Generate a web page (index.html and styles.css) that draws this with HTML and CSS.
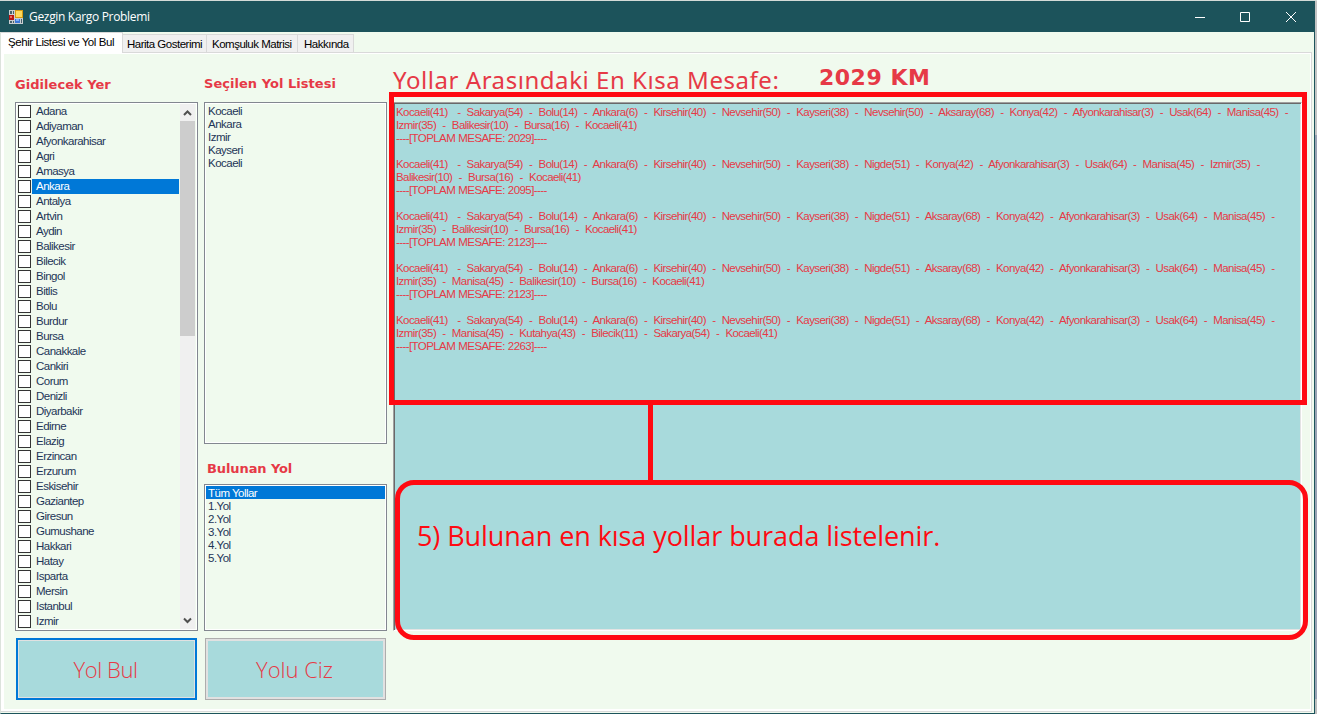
FILE: index.html
```html
<!DOCTYPE html>
<html lang="tr">
<head>
<meta charset="utf-8">
<title>Gezgin Kargo Problemi</title>
<link rel="stylesheet" href="styles.css">
</head>
<body>
<div class="desktop">
<div class="window">
  <header class="titlebar">
    <svg class="app-icon" width="14" height="14" viewBox="0 0 14 14" shape-rendering="crispEdges">
      <rect width="14" height="14" fill="#c9cdd0"/>
      <rect x="1" y="1" width="2" height="3" fill="#46606a"/><rect x="4" y="1" width="1" height="3" fill="#46606a"/>
      <rect x="0" y="5" width="5" height="5" fill="#b81414"/><rect x="1" y="6" width="2" height="2" fill="#ee6a5c"/>
      <rect x="6" y="0" width="8" height="8" fill="#d79a12"/><rect x="7" y="1" width="6" height="6" fill="#ffd95c"/>
      <rect x="1" y="11" width="2" height="2" fill="#46606a"/><rect x="4" y="11" width="1" height="2" fill="#46606a"/><rect x="6" y="9" width="5" height="4" fill="#3d78d8"/><rect x="7" y="9" width="3" height="2" fill="#7fb0f5"/><rect x="12" y="9" width="1" height="4" fill="#46606a"/>
    </svg>
    <span class="title">Gezgin Kargo Problemi</span>
    <svg class="controls" width="104" height="12" viewBox="0 0 104 12" fill="none" stroke="#fff">
      <path d="M0 6.5H10M45.5 1.5h9v9h-9zM91 1l10 10M101 1L91 11"/>
    </svg>
  </header>
  <nav class="tabs">
    <span class="tab active">Şehir Listesi ve Yol Bul</span><span class="tab w1">Harita Gosterimi</span><span class="tab w2">Komşuluk Matrisi</span><span class="tab w3">Hakkında</span>
  </nav>
  <main class="page">
    <section class="col-cities">
      <h2 class="label l-cities">Gidilecek Yer</h2>
      <div class="box cities">
        <ul class="checks">
          <li><i></i><span>Adana</span></li><li><i></i><span>Adiyaman</span></li><li><i></i><span>Afyonkarahisar</span></li><li><i></i><span>Agri</span></li><li><i></i><span>Amasya</span></li><li class="sel"><i></i><span>Ankara</span></li><li><i></i><span>Antalya</span></li><li><i></i><span>Artvin</span></li><li><i></i><span>Aydin</span></li><li><i></i><span>Balikesir</span></li><li><i></i><span>Bilecik</span></li><li><i></i><span>Bingol</span></li><li><i></i><span>Bitlis</span></li><li><i></i><span>Bolu</span></li><li><i></i><span>Burdur</span></li><li><i></i><span>Bursa</span></li><li><i></i><span>Canakkale</span></li><li><i></i><span>Cankiri</span></li><li><i></i><span>Corum</span></li><li><i></i><span>Denizli</span></li><li><i></i><span>Diyarbakir</span></li><li><i></i><span>Edirne</span></li><li><i></i><span>Elazig</span></li><li><i></i><span>Erzincan</span></li><li><i></i><span>Erzurum</span></li><li><i></i><span>Eskisehir</span></li><li><i></i><span>Gaziantep</span></li><li><i></i><span>Giresun</span></li><li><i></i><span>Gumushane</span></li><li><i></i><span>Hakkari</span></li><li><i></i><span>Hatay</span></li><li><i></i><span>Isparta</span></li><li><i></i><span>Mersin</span></li><li><i></i><span>Istanbul</span></li><li><i></i><span>Izmir</span></li>
        </ul>
        <div class="scroll">
          <svg width="15" height="17" viewBox="0 0 15 17"><path d="M4 11L7.5 7.5L11 11" fill="none" stroke="#505050" stroke-width="2"/></svg>
          <div class="thumb"></div>
          <svg class="down" width="15" height="17" viewBox="0 0 15 17"><path d="M4 6.5L7.5 10L11 6.5" fill="none" stroke="#505050" stroke-width="2"/></svg>
        </div>
      </div>
      <button class="btn primary">Yol Bul</button>
    </section>
    <section class="col-routes">
      <h2 class="label l-sel">Seçilen Yol Listesi</h2>
      <ul class="box list chosen"><li>Kocaeli</li><li>Ankara</li><li>Izmir</li><li>Kayseri</li><li>Kocaeli</li></ul>
      <h2 class="label l-found">Bulunan Yol</h2>
      <ul class="box list found"><li class="sel">Tüm Yollar</li><li>1.Yol</li><li>2.Yol</li><li>3.Yol</li><li>4.Yol</li><li>5.Yol</li></ul>
      <button class="btn">Yolu Ciz</button>
    </section>
    <section class="col-result">
      <div class="summary"><h1>Yollar Arasındaki En Kısa Mesafe:</h1><strong>2029 KM</strong></div>
      <div class="output"><p>Kocaeli(41)   -  Sakarya(54)  -  Bolu(14)  -  Ankara(6)  -  Kirsehir(40)  -  Nevsehir(50)  -  Kayseri(38)  -  Nevsehir(50)  -  Aksaray(68)  -  Konya(42)  -  Afyonkarahisar(3)  -  Usak(64)  -  Manisa(45)  -</p><p>Izmir(35)  -  Balikesir(10)  -  Bursa(16)  -  Kocaeli(41)</p><p class="total">----[TOPLAM MESAFE: 2029]----</p><p>Kocaeli(41)   -  Sakarya(54)  -  Bolu(14)  -  Ankara(6)  -  Kirsehir(40)  -  Nevsehir(50)  -  Kayseri(38)  -  Nigde(51)  -  Konya(42)  -  Afyonkarahisar(3)  -  Usak(64)  -  Manisa(45)  -  Izmir(35)  -</p><p>Balikesir(10)  -  Bursa(16)  -  Kocaeli(41)</p><p class="total">----[TOPLAM MESAFE: 2095]----</p><p>Kocaeli(41)   -  Sakarya(54)  -  Bolu(14)  -  Ankara(6)  -  Kirsehir(40)  -  Nevsehir(50)  -  Kayseri(38)  -  Nigde(51)  -  Aksaray(68)  -  Konya(42)  -  Afyonkarahisar(3)  -  Usak(64)  -  Manisa(45)  -</p><p>Izmir(35)  -  Balikesir(10)  -  Bursa(16)  -  Kocaeli(41)</p><p class="total">----[TOPLAM MESAFE: 2123]----</p><p>Kocaeli(41)   -  Sakarya(54)  -  Bolu(14)  -  Ankara(6)  -  Kirsehir(40)  -  Nevsehir(50)  -  Kayseri(38)  -  Nigde(51)  -  Aksaray(68)  -  Konya(42)  -  Afyonkarahisar(3)  -  Usak(64)  -  Manisa(45)  -</p><p>Izmir(35)  -  Manisa(45)  -  Balikesir(10)  -  Bursa(16)  -  Kocaeli(41)</p><p class="total">----[TOPLAM MESAFE: 2123]----</p><p>Kocaeli(41)   -  Sakarya(54)  -  Bolu(14)  -  Ankara(6)  -  Kirsehir(40)  -  Nevsehir(50)  -  Kayseri(38)  -  Nigde(51)  -  Aksaray(68)  -  Konya(42)  -  Afyonkarahisar(3)  -  Usak(64)  -  Manisa(45)  -</p><p>Izmir(35)  -  Manisa(45)  -  Kutahya(43)  -  Bilecik(11)  -  Sakarya(54)  -  Kocaeli(41)</p><p class="total">----[TOPLAM MESAFE: 2263]----</p></div>
    </section>
  </main>
</div>
<div class="behind"></div>
</div>
<div class="mark frame"></div>
<div class="mark stem"></div>
<div class="mark note">5) Bulunan en kısa yollar burada listelenir.</div>
</body>
</html>
```
FILE: styles.css
```css
* { box-sizing: border-box; margin: 0; padding: 0; }
body { width: 1317px; height: 714px; overflow: hidden; font: 11.5px/13px "Liberation Sans", Arial, sans-serif; letter-spacing: -.52px; color: #1d3557; }
ul { list-style: none; }
.desktop { display: flex; height: 714px; padding-top: 1px; background: #d4dbd8; }
.window { width: 1315px; height: 713px; background: #f0faee; border-right: 1px solid #1c535b; border-bottom: 1px solid #1c535b; border-left: 1px solid #dce3dc; }
.behind { flex: 1; background: linear-gradient(#c4c4c4 134px, #9aa2b4 134px 698px, #bdbdbd 698px); }
.titlebar { display: flex; align-items: center; height: 31px; margin: 0 -1px; padding: 0 16px 0 9px; background: #1c535b; color: #fff; }
.title { margin-left: 6px; font: 12px/16px "Open Sans", sans-serif; letter-spacing: -.32px; }
.controls { margin-left: auto; }
.tabs { display: flex; align-items: flex-end; height: 20px; color: #000; letter-spacing: -.5px; }
.tab { height: 18px; padding: 3px 0 0 4px; background: #f0f0f0; border: 1px solid #d9d9d9; border-left: 0; border-bottom: 0; white-space: nowrap; }
.tab.active { position: relative; width: 122px; height: 21px; margin-bottom: -1px; padding: 3px 0 0 7px; background: #fff; letter-spacing: -.43px; }
.w1 { width: 84px; } .w2 { width: 91px; padding-left: 5px; } .w3 { width: 56px; padding-left: 6px; }
.page { display: flex; width: 1311px; height: 660px; border: 1px solid #d9d9d9; border-left: 0; box-shadow: inset 0 0 0 1px #fff, inset 3px -2px 0 #fff; padding-left: 14px; }
.col-cities { width: 189px; }
.col-routes { width: 189px; }
.label { color: #e63946; font: bold 13px/16px "DejaVu Sans", sans-serif; letter-spacing: .04px; white-space: nowrap; }
.l-cities { margin-top: 24px; height: 25px; }
.l-sel { margin-top: 23px; height: 26px; }
.l-found { height: 23px; margin-top: 17px; padding-left: 3px; letter-spacing: -.1px; }
.box { width: 183px; border: 1px solid #828790; background: #f0faee; box-shadow: inset 0 0 0 1px #fff; }
.cities { display: flex; height: 529px; padding: 1px; }
.checks { width: 163px; }
.checks li { display: flex; height: 15px; gap: 1px; padding: 0 1px; }
.checks i { width: 13px; height: 13px; margin-top: 1px; border: 1px solid #333; background: #fff; }
.checks span { flex: 1; padding: 1px 0 0 4px; }
.sel { color: #fff; }
.checks .sel span, .list .sel { background: #0078d7; }
.scroll { width: 15px; background: #f0f0f0; display: flex; flex-direction: column; }
.thumb { height: 215px; background: #cdcdcd; }
.down { margin-top: auto; }
.list { padding: 1px; }
.list li { height: 13px; padding-left: 2px; }
.chosen { height: 342px; padding-top: 2px; }
.found { height: 147px; line-height: 15px; }
.btn { display: block; width: 181px; height: 62px; margin: 7px 0 0 1px; padding-right: 2px; border: 1px solid #adadad; box-shadow: inset 0 0 0 2px #e1e1e1; background: #a8dadc; color: #e63946; font: 300 22px "Open Sans", sans-serif; }
.primary { border: 2px solid #0078d7; box-shadow: inset 0 0 0 1px #e1e1e1; letter-spacing: -.4px; }
.col-result { width: 909px; }
.summary { display: flex; height: 49px; color: #e63946; white-space: nowrap; }
h1 { width: 426px; padding-top: 12px; font: 400 24px/30px "Noto Sans", sans-serif; letter-spacing: .55px; }
.summary strong { padding-top: 11px; font: bold 22px/28px "DejaVu Sans", sans-serif; letter-spacing: .5px; }
.output { height: 529px; padding: 3px 0 0 2px; border: 1px solid #a0a0a0; border-right-color: #fff; border-bottom-color: #fff; box-shadow: inset 1px 1px 0 #696969, inset -1px -1px 0 #e3e3e3; background: #a8dadc; color: #e63946; white-space: pre; letter-spacing: -.58px; word-spacing: .5px; }
.total { margin-bottom: 13px; }
.mark { position: absolute; border: 5px solid #ff0a12; }
.frame { left: 389px; top: 92px; width: 918px; height: 313px; }
.stem { left: 648px; top: 400px; width: 5px; height: 82px; border-width: 0 0 0 5px; }
.note { left: 395px; top: 480px; width: 913px; height: 160px; border-radius: 19px; padding: 33px 17px; color: #ff0a12; font: 27px/36px "Open Sans", sans-serif; letter-spacing: -.07px; white-space: nowrap; }
```
